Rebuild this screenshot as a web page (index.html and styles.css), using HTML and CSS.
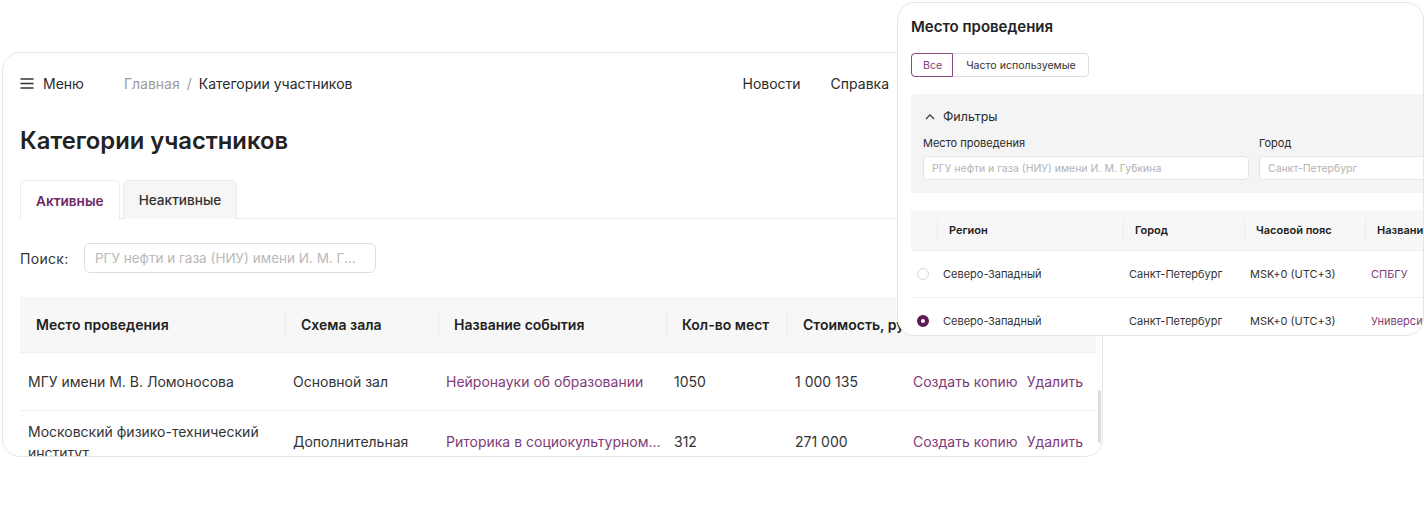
FILE: index.html
```html
<!DOCTYPE html>
<html lang="ru">
<head>
<meta charset="utf-8">
<title>Категории участников</title>
<link rel="stylesheet" href="styles.css">
</head>
<body>
<main class="page">
  <section class="card">
    <header class="topbar">
      <div class="menu">
        <svg class="burger" width="14" height="11" viewBox="0 0 14 11"><path d="M0.5 1h13M0.5 5.5h13M0.5 10h13" stroke="#333" stroke-width="1.3" fill="none"/></svg>
        <span>Меню</span>
      </div>
      <nav class="crumbs"><span class="muted">Главная</span><span class="sep">/</span><span>Категории участников</span></nav>
      <nav class="links"><a>Новости</a><a>Справка</a></nav>
    </header>
    <h1 class="title">Категории участников</h1>
    <div class="tabs">
      <div class="tab active">Активные</div>
      <div class="tab">Неактивные</div>
    </div>
    <div class="search">
      <label>Поиск:</label>
      <div class="input">РГУ нефти и газа (НИУ) имени И. М. Г...</div>
    </div>
    <table class="grid">
      <colgroup><col class="c1"><col class="c2"><col class="c3"><col class="c4"><col class="c5"><col class="c6"></colgroup>
      <thead>
        <tr><th>Место проведения</th><th>Схема зала</th><th>Название события</th><th>Кол-во мест</th><th>Стоимость, руб.</th><th></th></tr>
      </thead>
      <tbody>
        <tr>
          <td>МГУ имени М. В. Ломоносова</td><td>Основной зал</td><td class="link">Нейронауки об образовании</td><td>1050</td><td>1 000 135</td>
          <td class="actions"><a>Создать копию</a><a>Удалить</a></td>
        </tr>
        <tr class="tall">
          <td>Московский физико-технический институт</td><td>Дополнительная</td><td class="link">Риторика в социокультурном...</td><td>312</td><td>271 000</td>
          <td class="actions"><a>Создать копию</a><a>Удалить</a></td>
        </tr>
      </tbody>
    </table>
    <div class="thumb"></div>
  </section>

  <aside class="popup">
    <div class="popup-inner">
      <h2 class="ptitle">Место проведения</h2>
      <div class="seg">
        <span class="seg-item on">Все</span><span class="seg-item">Часто используемые</span>
      </div>
      <div class="filters">
        <div class="ftoggle">
          <svg width="10" height="7" viewBox="0 0 10 7"><path d="M1 6L5 1.8L9 6" stroke="#333" stroke-width="1.2" fill="none"/></svg>
          <span>Фильтры</span>
        </div>
        <div class="fields">
          <div class="field f1"><div class="flabel">Место проведения</div><div class="finput">РГУ нефти и газа (НИУ) имени И. М. Губкина</div></div>
          <div class="field f2"><div class="flabel">Город</div><div class="finput">Санкт-Петербург</div></div>
        </div>
      </div>
      <table class="ptable">
        <colgroup><col class="p0"><col class="p1"><col class="p2"><col class="p3"><col class="p4"></colgroup>
        <thead><tr><th></th><th>Регион</th><th>Город</th><th>Часовой пояс</th><th>Название</th></tr></thead>
        <tbody>
          <tr><td><span class="radio"></span></td><td>Северо-Западный</td><td>Санкт-Петербург</td><td>MSK+0 (UTC+3)</td><td class="link">СПБГУ</td></tr>
          <tr><td><span class="radio checked"></span></td><td>Северо-Западный</td><td>Санкт-Петербург</td><td>MSK+0 (UTC+3)</td><td class="link">Университет</td></tr>
        </tbody>
      </table>
    </div>
  </aside>
</main>
</body>
</html>
```
FILE: styles.css
```css
* { box-sizing: border-box; }
html, body { margin: 0; }
body {
  width: 1424px;
  height: 506px;
  overflow: hidden;
  background: #fff;
  font-family: Inter, "Noto Sans", sans-serif;
  color: #222;
}
.page { position: relative; padding: 52px 0 0 2px; height: 506px; }

.card {
  position: relative;
  width: 1101px;
  height: 405px;
  border: 1px solid #e7e7e7;
  border-radius: 18px;
  overflow: hidden;
  padding: 10px 0 0 17px;
}
.topbar {
  display: flex;
  align-items: center;
  height: 40px;
  font-size: 14px;
  color: #2a2a2a;
  padding-right: 213px;
}
.menu { display: flex; align-items: center; gap: 9px; }
.burger { display: block; }
.crumbs { margin-left: 40px; display: flex; gap: 7px; }
.crumbs .muted { color: #9c9c9c; }
.crumbs .sep { color: #9c9c9c; }
.links { margin-left: auto; display: flex; gap: 30px; }

.title {
  margin: 23px 0 0;
  font-size: 23.8px;
  line-height: 30px;
  font-weight: 600;
  color: #222;
}
.tabs {
  margin: 24px 5px 0 0;
  display: flex;
  gap: 3px;
  border-bottom: 1px solid #ebebeb;
  height: 39px;
}
.tab {
  height: 39px;
  padding: 0 15px;
  display: flex;
  align-items: center;
  border: 1px solid #ebebeb;
  border-bottom: none;
  border-radius: 6px 6px 0 0;
  background: #f6f6f6;
  font-size: 13.6px;
  font-weight: 500;
  color: #333;
}
.tab.active {
  background: #fff;
  color: #6e2a64;
  font-weight: 600;
  height: 40px;
  margin-bottom: -1px;
}
.search {
  margin-top: 24px;
  display: flex;
  align-items: center;
  gap: 16px;
  font-size: 14px;
  color: #333;
}
.search label { width: 48px; letter-spacing: 0.3px; }
.input {
  width: 292px;
  height: 30px;
  border: 1px solid #dedede;
  border-radius: 6px;
  padding: 0 10px;
  display: flex;
  align-items: center;
  font-size: 13.5px;
  color: #b9b9b9;
}

.grid {
  margin-top: 24px;
  width: 1076px;
  border-collapse: collapse;
  table-layout: fixed;
}
.grid .c1 { width: 265px; }
.grid .c2 { width: 153px; }
.grid .c3 { width: 228px; }
.grid .c4 { width: 121px; }
.grid .c5 { width: 118px; }
.grid .c6 { width: 191px; }
.grid th {
  height: 55px;
  background: #f7f7f7;
  text-align: left;
  font-size: 14px;
  font-weight: 600;
  color: #222;
  padding: 0 0 0 16px;
  white-space: nowrap;
  overflow: hidden;
}
.grid th + th {
  background-image: linear-gradient(#ebebeb, #ebebeb);
  background-size: 1px 24px;
  background-position: left center;
  background-repeat: no-repeat;
}
.grid td {
  height: 58px;
  padding: 0 8px;
  font-size: 14px;
  color: #333;
  line-height: 21px;
  border-top: 1px solid #efefef;
  white-space: nowrap;
}
.grid tr.tall td { height: 62px; padding-top: 10px; padding-bottom: 10px; }
.grid tr.tall td:first-child { white-space: normal; }
.grid td.link { color: #7f3b77; }
.grid td.actions { color: #7f3b77; }
.actions a { margin-right: 9px; }

.thumb {
  position: absolute;
  left: 1095px;
  top: 337px;
  width: 3px;
  height: 53px;
  border-radius: 2px;
  background: #d9dde3;
}

.popup {
  position: absolute;
  left: 897px;
  top: 2px;
  width: 527px;
  height: 334px;
  background: #fff;
  border: 1px solid #e5e5e5;
  border-radius: 18px;
  overflow: hidden;
}
.popup-inner { width: 700px; padding: 13px 0 0 13px; }
.ptitle {
  margin: 0;
  font-size: 15px;
  line-height: 22px;
  font-weight: 600;
  color: #222;
}
.seg {
  margin-top: 15px;
  display: flex;
  width: max-content;
  border: 1px solid #dcdcdc;
  border-radius: 4px;
  height: 24px;
}
.seg-item {
  display: flex;
  align-items: center;
  padding: 0 12px 0 13px;
  font-size: 10.6px;
  color: #333;
}
.seg-item.on {
  margin: -1px 0 -1px -1px;
  border: 1px solid #8a4a82;
  border-radius: 4px 0 0 4px;
  color: #7f3b77;
  height: 24px;
  padding: 0 10px 0 11px;
}
.filters {
  margin-top: 17px;
  width: 650px;
  background: #f4f4f4;
  border-radius: 4px;
  padding: 13px 0 13px 12px;
}
.ftoggle {
  display: flex;
  align-items: center;
  gap: 8px;
  height: 18px;
  padding-left: 2px;
  font-size: 12.5px;
  color: #2a2a2a;
}
.ftoggle svg { display: block; }
.fields { display: flex; gap: 10px; margin-top: 11px; }
.field.f1 { width: 326px; }
.field.f2 { width: 200px; }
.flabel { font-size: 11px; line-height: 14px; color: #2a2a2a; }
.finput {
  margin-top: 6px;
  height: 24px;
  background: #fff;
  border: 1px solid #e3e3e3;
  border-radius: 4px;
  padding: 0 8px;
  display: flex;
  align-items: center;
  font-size: 10.5px;
  color: #b3b3b3;
  white-space: nowrap;
}
.ptable {
  margin-top: 17px;
  width: 600px;
  border-collapse: collapse;
  table-layout: fixed;
}
.ptable .p0 { width: 26px; }
.ptable .p1 { width: 186px; }
.ptable .p2 { width: 121px; }
.ptable .p3 { width: 121px; }
.ptable .p4 { width: 146px; }
.ptable th {
  height: 40px;
  background: #f7f7f7;
  text-align: left;
  font-size: 11px;
  font-weight: 600;
  color: #222;
  padding: 0 0 0 12px;
  white-space: nowrap;
}
.ptable th + th {
  background-image: linear-gradient(#ebebeb, #ebebeb);
  background-size: 1px 22px;
  background-position: left center;
  background-repeat: no-repeat;
}
.ptable td {
  height: 47px;
  padding: 0 6px;
  font-size: 11px;
  color: #333;
  border-top: 1px solid #efefef;
  white-space: nowrap;
}
.ptable td:first-child { padding: 0 0 0 6px; }
.ptable td.link { color: #7f3b77; }
.radio {
  display: block;
  width: 12px;
  height: 12px;
  border-radius: 50%;
  border: 1px solid #d8d8d8;
  background: #fff;
}
.radio.checked {
  border: 4px solid #5e1b54;
  background: #fff;
}
```
